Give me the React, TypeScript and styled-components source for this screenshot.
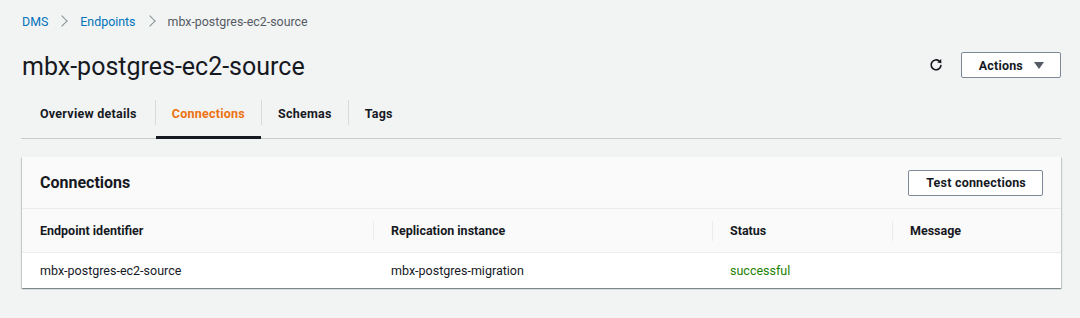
import styled, { createGlobalStyle } from "styled-components";

const GlobalStyle = createGlobalStyle`
  html, body {
    margin: 0;
    padding: 0;
    background: #f2f3f3;
  }
  body {
    font-family: Roboto, "Liberation Sans", sans-serif;
    color: #16191f;
    -webkit-font-smoothing: antialiased;
  }
`;

const columns = [
  { title: "Endpoint identifier", width: "351px" },
  { title: "Replication instance", width: "339px" },
  { title: "Status", width: "180px" },
  { title: "Message", width: "1fr" },
];

const rows = [
  {
    endpoint: "mbx-postgres-ec2-source",
    instance: "mbx-postgres-migration",
    status: "successful",
    message: "",
  },
];

const tabs = ["Overview details", "Connections", "Schemas", "Tags"];

const App = () => {
  const gridTemplate = columns.map((c) => c.width).join(" ");

  return (
    <>
      <GlobalStyle />
      <Page>
        <Breadcrumbs>
          <Crumb href="#">DMS</Crumb>
          <Chevron />
          <Crumb href="#">Endpoints</Crumb>
          <Chevron />
          <CurrentCrumb>mbx-postgres-ec2-source</CurrentCrumb>
        </Breadcrumbs>

        <Header>
          <Title>mbx-postgres-ec2-source</Title>
          <HeaderActions>
            <IconButton aria-label="Refresh">
              <svg width="14" height="14" viewBox="0 0 16 16" fill="none">
                <path
                  d="M13.6 8.6A5.6 5.6 0 1 1 11.7 3.6"
                  stroke="#16191f"
                  strokeWidth="1.9"
                  strokeLinecap="round"
                />
                <path d="M13.9 1.2 L14.2 6.1 L9.4 5.2 Z" fill="#16191f" />
              </svg>
            </IconButton>
            <Button>
              Actions
              <Caret />
            </Button>
          </HeaderActions>
        </Header>

        <TabList>
          {tabs.map((t, i) => (
            <Tab key={t} active={t === "Connections"} first={i === 0}>
              <TabLabel active={t === "Connections"}>{t}</TabLabel>
            </Tab>
          ))}
        </TabList>

        <Card>
          <CardHeader>
            <CardTitle>Connections</CardTitle>
            <Button>Test connections</Button>
          </CardHeader>
          <TableHead style={{ gridTemplateColumns: gridTemplate }}>
            {columns.map((c, i) => (
              <HeadCell key={c.title} divider={i > 0}>
                {c.title}
              </HeadCell>
            ))}
          </TableHead>
          {rows.map((r) => (
            <TableRow key={r.endpoint} style={{ gridTemplateColumns: gridTemplate }}>
              <Cell>{r.endpoint}</Cell>
              <Cell>{r.instance}</Cell>
              <StatusCell>{r.status}</StatusCell>
              <Cell>{r.message}</Cell>
            </TableRow>
          ))}
        </Card>
      </Page>
    </>
  );
};

export default App;

const Page = styled.div`
  padding: 0 19px 31px 21px;
`;

const Breadcrumbs = styled.nav`
  display: flex;
  align-items: center;
  height: 42px;
  padding-left: 1px;
  font-size: 12.4px;
`;

const Crumb = styled.a`
  color: #0073bb;
  text-decoration: none;
`;

const CurrentCrumb = styled.span`
  color: #545b64;
`;

const Chevron = styled.span`
  display: inline-block;
  width: 7px;
  height: 7px;
  margin: 0 14px 0 10px;
  border-top: 1.5px solid #879596;
  border-right: 1.5px solid #879596;
  transform: rotate(45deg);
`;

const Header = styled.div`
  display: flex;
  align-items: center;
  justify-content: space-between;
  height: 46px;
`;

const Title = styled.h1`
  margin: 0;
  padding-left: 1px;
  padding-top: 2px;
  font-size: 25px;
  font-weight: 400;
  color: #16191f;
`;

const HeaderActions = styled.div`
  display: flex;
  align-items: center;
  gap: 18px;
`;

const IconButton = styled.button`
  display: flex;
  align-items: center;
  justify-content: center;
  padding: 0;
  border: none;
  background: none;
  cursor: pointer;
`;

const Button = styled.button`
  display: inline-flex;
  align-items: center;
  justify-content: center;
  gap: 11px;
  height: 26px;
  padding: 0 16px 0 17px;
  border: 1px solid #7d8998;
  border-radius: 2px;
  background: #fff;
  color: #16191f;
  font-family: inherit;
  font-size: 12.5px;
  font-weight: 700;
  letter-spacing: 0.2px;
  cursor: pointer;
`;

const Caret = styled.span`
  width: 0;
  height: 0;
  border-left: 5px solid transparent;
  border-right: 5px solid transparent;
  border-top: 7px solid #545b64;
`;

const TabList = styled.div`
  display: flex;
  align-items: stretch;
  height: 40px;
  margin-top: 10px;
  border-bottom: 1px solid #c6cbcd;
`;

interface $TabProps {
  active: boolean;
  first: boolean;
}

const Tab = styled.div<$TabProps>`
  position: relative;
  display: flex;
  align-items: center;
  padding: 0 16px 9px 16px;
  margin-left: ${({ first }) => (first ? "0" : "1px")};

  ${({ first }) => (first ? "padding-left: 19px; padding-right: 18px;" : "")}

  &::before {
    content: "";
    display: ${({ first }) => (first ? "none" : "block")};
    position: absolute;
    left: -1px;
    top: 2px;
    width: 1px;
    height: 25px;
    background: #d5dbdb;
  }

  &::after {
    content: "";
    display: ${({ active }) => (active ? "block" : "none")};
    position: absolute;
    left: 0;
    right: 0;
    bottom: -1px;
    height: 3px;
    background: #16191f;
  }
`;

const TabLabel = styled.span<{ active: boolean }>`
  font-size: 12.5px;
  font-weight: 700;
  letter-spacing: 0.25px;
  color: ${({ active }) => (active ? "#ec7211" : "#16191f")};
`;

const Card = styled.section`
  margin-top: 18px;
  margin-left: 1px;
  background: #fff;
  box-shadow: 0 1px 1px 0 rgba(0, 28, 36, 0.3), 1px 1px 1px 0 rgba(0, 28, 36, 0.15),
    -1px 1px 1px 0 rgba(0, 28, 36, 0.15);
`;

const CardHeader = styled.div`
  display: flex;
  align-items: center;
  justify-content: space-between;
  height: 51px;
  padding: 0 18px;
  background: #fafafa;
  border-bottom: 1px solid #eaeded;
`;

const CardTitle = styled.h2`
  margin: 0;
  font-size: 16px;
  font-weight: 700;
  color: #16191f;
`;

const TableHead = styled.div`
  display: grid;
  height: 43px;
  background: #fafafa;
  border-bottom: 1px solid #eaeded;
`;

const HeadCell = styled.div<{ divider: boolean }>`
  position: relative;
  display: flex;
  align-items: center;
  padding-left: 18px;
  font-size: 12.5px;
  font-weight: 700;
  color: #16191f;

  &::before {
    content: "";
    display: ${({ divider }) => (divider ? "block" : "none")};
    position: absolute;
    left: 0;
    top: 12px;
    width: 1px;
    height: 20px;
    background: #eaeded;
  }
`;

const TableRow = styled.div`
  display: grid;
  height: 35px;
`;

const Cell = styled.div`
  display: flex;
  align-items: center;
  padding-left: 18px;
  font-size: 12.5px;
  color: #16191f;
`;

const StatusCell = styled(Cell)`
  color: #1d8102;
`;
